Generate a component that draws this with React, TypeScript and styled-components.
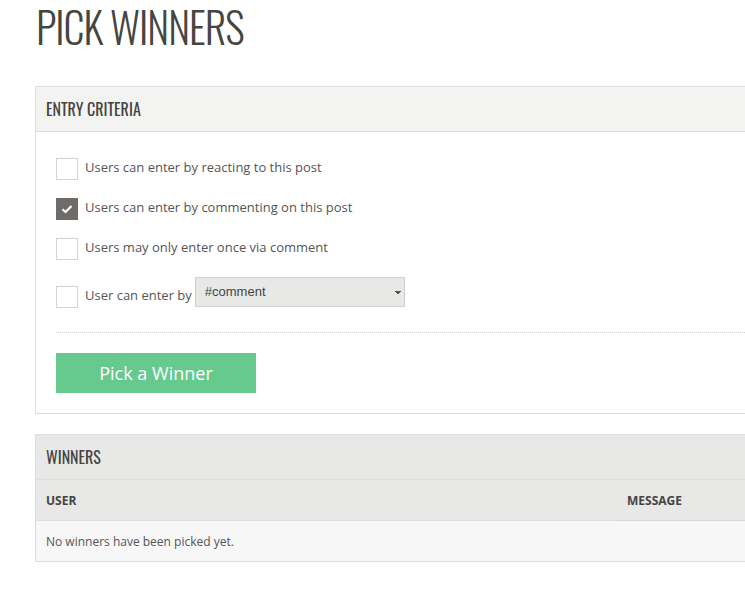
import React, { useState } from 'react';
import styled, { createGlobalStyle } from 'styled-components';

const GlobalStyle = createGlobalStyle`
  html, body {
    margin: 0;
    padding: 0;
    background: #fff;
    overflow: hidden;
  }
  body {
    font-family: "Open Sans", "Liberation Sans", sans-serif;
    color: #555;
  }
`;

const headingFont = `"Oswald", "Liberation Sans Narrow", "DejaVu Sans Condensed", sans-serif`;

const Page = styled.div`
  padding: 0 0 0 35px;
  width: 760px;
`;

const Title = styled.h1`
  margin: 0;
  padding: 0 0 0 1px;
  font-family: ${headingFont};
  font-weight: 300;
  font-size: 42px;
  line-height: 52px;
  letter-spacing: -1px;
  color: #454542;
`;

const Panel = styled.section<{ $headerBg: string; $top: number }>`
  margin-top: ${p => p.$top}px;
  border: 1px solid #dcdcdc;
  border-right: none;
  background: #fff;

  & > header {
    background: ${p => p.$headerBg};
  }
`;

const PanelHeader = styled.header`
  height: 44px;
  display: flex;
  align-items: center;
  padding: 0 10px;
  border-bottom: 1px solid #dcdcdc;
  font-family: ${headingFont};
  font-size: 16px;
  color: #444;
  text-transform: uppercase;
`;

const PanelBody = styled.div`
  padding: 26px 0 20px 20px;
`;

const OptionRow = styled.label<{ $gap: number }>`
  display: flex;
  align-items: center;
  gap: 7px;
  margin-bottom: ${p => p.$gap}px;
  font-size: 13px;
  color: #555;
  cursor: pointer;
`;

const OptionText = styled.span`
  line-height: 18px;
  margin-top: -4px;
`;

const Box = styled.span<{ $checked: boolean }>`
  width: 22px;
  height: 22px;
  box-sizing: border-box;
  flex: none;
  display: flex;
  align-items: center;
  justify-content: center;
  border: 1px solid ${p => (p.$checked ? '#6e6b68' : '#d6d2ce')};
  background: ${p => (p.$checked ? '#6e6b68' : '#fff')};
`;

const Select = styled.select`
  width: 210px;
  height: 30px;
  margin-left: -4px;
  margin-top: -11px;
  padding: 0 9px;
  border: 1px solid #cfcfcf;
  background: #e8e8e7;
  font-family: "Liberation Sans", Arial, sans-serif;
  font-size: 13px;
  color: #444;
  appearance: none;
  background-image: linear-gradient(45deg, transparent 50%, #555 50%),
    linear-gradient(-45deg, transparent 50%, #555 50%);
  background-size: 3px 4px, 3px 4px;
  background-position: 199px 13px, 202px 13px;
  background-repeat: no-repeat;
  outline: none;
`;

const Divider = styled.hr`
  border: none;
  border-top: 1px dotted #cfcfcf;
  margin: 24px 0 20px;
`;

const WinnerButton = styled.button`
  width: 200px;
  height: 40px;
  border: none;
  background: #66c98d;
  color: #fff;
  font-family: "Open Sans", sans-serif;
  font-size: 18px;
  cursor: pointer;
`;

const Table = styled.table`
  width: 100%;
  border-collapse: separate;
  border-spacing: 0;
  font-size: 12px;
`;

const Th = styled.th<{ $width?: number; $dotted?: boolean }>`
  width: ${p => (p.$width ? `${p.$width}px` : 'auto')};
  height: 40px;
  box-sizing: content-box;
  padding: 0 10px;
  text-align: left;
  font-weight: 700;
  color: #444;
  background: #e8e8e6;
  border-bottom: 1px ${p => (p.$dotted ? 'dotted' : 'solid')} #d6d6d6;
`;

const Td = styled.td`
  height: 40px;
  padding: 0 10px;
  background: #f7f7f7;
  color: #555;
`;

const Check = () => (
  <svg width="12" height="10" viewBox="0 0 12 10">
    <path d="M1.5 5.2 L4.6 8 L10.5 2" fill="none" stroke="#fff" strokeWidth="2.2" />
  </svg>
);

const options = [
  { id: 'react', label: 'Users can enter by reacting to this post', gap: 18 },
  { id: 'comment', label: 'Users can enter by commenting on this post', gap: 18 },
  { id: 'once', label: 'Users may only enter once via comment', gap: 26 },
];

export default function App() {
  const [checked, setChecked] = useState<Record<string, boolean>>({ comment: true });
  const toggle = (id: string) => setChecked(prev => ({ ...prev, [id]: !prev[id] }));

  return (
    <Page>
      <GlobalStyle />
      <Title>PICK WINNERS</Title>

      <Panel $headerBg="#f3f3f1" $top={34}>
        <PanelHeader>Entry Criteria</PanelHeader>
        <PanelBody>
          {options.map(o => (
            <OptionRow key={o.id} $gap={o.gap} onClick={() => toggle(o.id)}>
              <Box $checked={!!checked[o.id]}>{checked[o.id] && <Check />}</Box>
              <OptionText>{o.label}</OptionText>
            </OptionRow>
          ))}
          <OptionRow $gap={0}>
            <Box $checked={!!checked.keyword} onClick={() => toggle('keyword')}>
              {checked.keyword && <Check />}
            </Box>
            <OptionText>User can enter by</OptionText>
            <Select defaultValue="#comment">
              <option>#comment</option>
            </Select>
          </OptionRow>
          <Divider />
          <WinnerButton>Pick a Winner</WinnerButton>
        </PanelBody>
      </Panel>

      <Panel $headerBg="#e8e8e6" $top={20}>
        <PanelHeader>Winners</PanelHeader>
        <Table>
          <thead>
            <tr>
              <Th $width={561} $dotted>USER</Th>
              <Th>MESSAGE</Th>
            </tr>
          </thead>
          <tbody>
            <tr>
              <Td colSpan={2}>No winners have been picked yet.</Td>
            </tr>
          </tbody>
        </Table>
      </Panel>
    </Page>
  );
}
